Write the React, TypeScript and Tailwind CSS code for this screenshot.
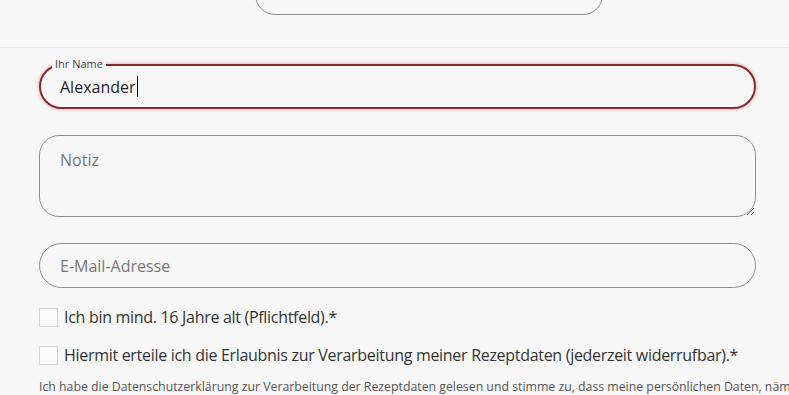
export default function App() {
    return (
        <div
            className="w-[789px] h-[395px] overflow-hidden bg-[#f7f7f7] text-[#333]"
            style={{ fontFamily: '"Open Sans", "Liberation Sans", sans-serif' }}
        >
            {/* previous step button, cut off at the top */}
            <div className="ml-[255px] w-[348px] h-[40px] -mt-[25px] rounded-full border border-[#8a8a8a]" />

            <div className="mt-[32px] border-t border-[#ececec]" />

            <form className="pl-[39px] pr-[33px] pt-[16px]">
                {/* name */}
                <div className="relative">
                    <div className="h-[45px] rounded-full border-2 border-[#862a2a] shadow-[0_0_3px_1px_rgba(220,80,80,0.35)] flex items-center px-[19px]">
                        <span className="text-[16px] text-[#1f1f1f]">Alexander</span>
                        <span className="ml-[1px] w-[1px] h-[21px] bg-black" />
                    </div>
                    <span className="absolute left-[13px] -top-[7px] px-[3px] bg-[#f7f7f7] text-[11px] leading-[13px] text-[#444]">
                        Ihr Name
                    </span>
                </div>

                {/* note */}
                <textarea
                    placeholder="Notiz"
                    className="mt-[26px] block w-full h-[82px] rounded-[20px] border border-[#8f8f8f] bg-transparent px-[20px] py-[13px] text-[16px] leading-[22px] placeholder:text-[#777] outline-none resize-y"
                />

                {/* email */}
                <input
                    placeholder="E-Mail-Adresse"
                    className="mt-[26px] block w-full h-[45px] rounded-full border border-[#8f8f8f] bg-transparent px-[20px] text-[16px] placeholder:text-[#777] outline-none"
                />

                <label className="mt-[17px] flex items-center gap-[6px] text-[16px] text-[#333]">
                    <span className="w-[19px] h-[19px] border border-[#d6d6d6] bg-[#fafafa] shrink-0" />
                    <span className="tracking-[-0.3px]">Ich bin mind. 16 Jahre alt (Pflichtfeld).*</span>
                </label>

                <label className="mt-[14px] flex items-center gap-[6px] text-[16px] text-[#333]">
                    <span className="w-[19px] h-[19px] border border-[#d6d6d6] bg-[#fafafa] shrink-0" />
                    <span className="tracking-[-0.3px] whitespace-nowrap">
                        Hiermit erteile ich die Erlaubnis zur Verarbeitung meiner Rezeptdaten (jederzeit widerrufbar).*
                    </span>
                </label>

                <p className="mt-[11px] whitespace-nowrap text-[12.3px] text-[#555]">
                    Ich habe die Datenschutzerklärung zur Verarbeitung der Rezeptdaten gelesen und stimme zu, dass meine persönlichen Daten, nämlich mein Rezept, verarbeitet werden.
                </p>
            </form>
        </div>
    );
}
